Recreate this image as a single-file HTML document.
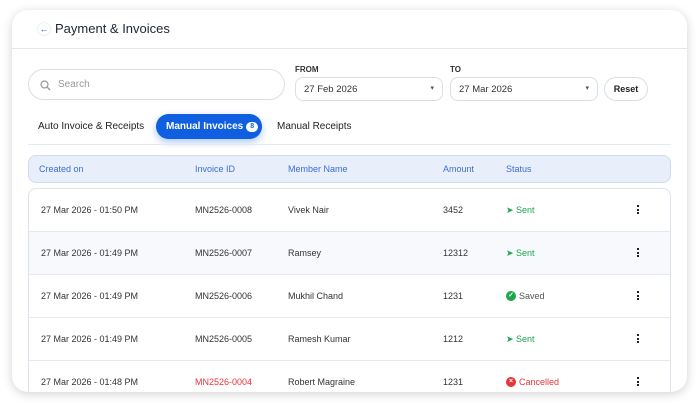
<!DOCTYPE html>
<html><head><meta charset="utf-8"><style>
*{box-sizing:border-box;margin:0;padding:0}
body{width:699px;height:406px;background:#fff;font-family:"Liberation Sans",sans-serif;position:relative;overflow:hidden;color:#333}
.card{position:absolute;left:12px;top:10px;width:675px;height:382px;background:#fff;border-radius:16px;box-shadow:0 2px 10px rgba(0,0,0,.18);overflow:hidden}
.hdr{position:absolute;left:0;top:0;width:675px;height:39px;border-bottom:1px solid #e3e7ee}
.back{position:absolute;left:25px;top:12px;width:14px;height:14px;border-radius:50%;border:1px solid #eef0f4;color:#1a5fd6;font-size:9px;line-height:12px;text-align:center}
.title{position:absolute;left:43px;top:11px;font-size:13px;color:#1d2433}
.abs{position:absolute;white-space:nowrap}
.search{left:16px;top:59px;width:257px;height:31px;border:1px solid #d9dee7;border-radius:16px}
.lbl{font-size:8px;font-weight:bold;color:#333}
.sel{height:24px;border:1px solid #d9dee7;border-radius:8px;font-size:9.5px;color:#333;padding:6px 8px}
.sel:after{content:"▾";position:absolute;right:8px;top:6px;font-size:7px;color:#555}
.tab{font-size:10px;color:#222;top:111px}
.pill{left:144px;top:104px;width:106px;height:25px;border-radius:13px;background:#0f5fe0;color:#fff;font-size:10px;font-weight:bold;padding:7px 0 0 10px;box-shadow:0 3px 8px rgba(15,95,224,.35)}
.badge{display:inline-block;background:#fff;color:#0f5fe0;border-radius:6px;width:12px;height:10px;font-size:7px;text-align:center;line-height:10px;margin-left:3px;vertical-align:1px}
.thead{left:16px;top:145px;width:643px;height:28px;background:#e8effb;border:1px solid #cfdbf0;border-radius:8px;font-size:9px;color:#3b6fd0}
.thead span{position:absolute;top:8px}
.tbl{left:16px;top:178px;width:643px;height:230px;border:1px solid #dde3ec;border-radius:8px;overflow:hidden}
.row{position:absolute;left:0;width:643px;height:43px;border-bottom:1px solid #e6eaf0;font-size:9px;color:#333}
.row span{position:absolute;top:16px;display:flex;align-items:center;gap:3px}
.g{color:#1aa84a}.r{color:#e8333a}
.ic{display:inline-block;width:10px;height:10px;border-radius:50%;color:#fff;font-size:7px;text-align:center;line-height:10px;font-weight:bold}
.row span.dots{display:block;width:3px;left:608px;top:16px}
.dots i{display:block;width:2px;height:2px;background:#222;margin-bottom:1.5px}
</style></head><body>
<div class="card">
<div class="hdr"><div class="back">←</div><div class="title">Payment &amp; Invoices</div></div>
<div class="abs search"><svg class="abs" style="left:11px;top:10px" width="11" height="11" viewBox="0 0 11 11"><circle cx="4.5" cy="4.5" r="3.5" fill="none" stroke="#999" stroke-width="1.2"/><path d="M7 7l3 3" stroke="#999" stroke-width="1.3"/></svg><span class="abs" style="left:29px;top:9px;font-size:10px;color:#999">Search</span></div>
<div class="abs lbl" style="left:283px;top:55px">FROM</div>
<div class="abs sel" style="left:283px;top:67px;width:148px">27 Feb 2026</div>
<div class="abs lbl" style="left:438px;top:55px">TO</div>
<div class="abs sel" style="left:438px;top:67px;width:148px">27 Mar 2026</div>
<div class="abs" style="left:592px;top:67px;width:44px;height:24px;border:1px solid #d9dee7;border-radius:12px;font-size:9px;font-weight:bold;text-align:center;line-height:22px;color:#222">Reset</div>
<div class="abs tab" style="left:26px">Auto Invoice &amp; Receipts</div>
<div class="abs pill">Manual Invoices<span class="badge">8</span></div>
<div class="abs tab" style="left:265px">Manual Receipts</div>
<div class="abs" style="left:16px;top:134px;width:643px;height:1px;background:#e6eaf0"></div>
<div class="abs thead"><span style="left:10px">Created on</span><span style="left:166px">Invoice ID</span><span style="left:259px">Member Name</span><span style="left:414px">Amount</span><span style="left:477px">Status</span></div>
<div class="abs tbl">
<div class="row" style="top:0"><span style="left:12px">27 Mar 2026 - 01:50 PM</span><span style="left:166px">MN2526-0008</span><span style="left:259px">Vivek Nair</span><span style="left:414px">3452</span><span class="g" style="left:477px">➤ Sent</span><span class="dots"><i></i><i></i><i></i></span></div>
<div class="row" style="top:43px;background:#f7f9fc"><span style="left:12px">27 Mar 2026 - 01:49 PM</span><span style="left:166px">MN2526-0007</span><span style="left:259px">Ramsey</span><span style="left:414px">12312</span><span class="g" style="left:477px">➤ Sent</span><span class="dots"><i></i><i></i><i></i></span></div>
<div class="row" style="top:86px"><span style="left:12px">27 Mar 2026 - 01:49 PM</span><span style="left:166px">MN2526-0006</span><span style="left:259px">Mukhil Chand</span><span style="left:414px">1231</span><span style="left:477px;color:#555"><b class="ic" style="background:#1aa84a">✓</b>Saved</span><span class="dots"><i></i><i></i><i></i></span></div>
<div class="row" style="top:129px"><span style="left:12px">27 Mar 2026 - 01:49 PM</span><span style="left:166px">MN2526-0005</span><span style="left:259px">Ramesh Kumar</span><span style="left:414px">1212</span><span class="g" style="left:477px">➤ Sent</span><span class="dots"><i></i><i></i><i></i></span></div>
<div class="row" style="top:172px"><span style="left:12px">27 Mar 2026 - 01:48 PM</span><span class="r" style="left:166px">MN2526-0004</span><span style="left:259px">Robert Magraine</span><span style="left:414px">1231</span><span class="r" style="left:477px"><b class="ic" style="background:#e8333a">×</b>Cancelled</span><span class="dots"><i></i><i></i><i></i></span></div>
</div>
</div>
</body></html>
